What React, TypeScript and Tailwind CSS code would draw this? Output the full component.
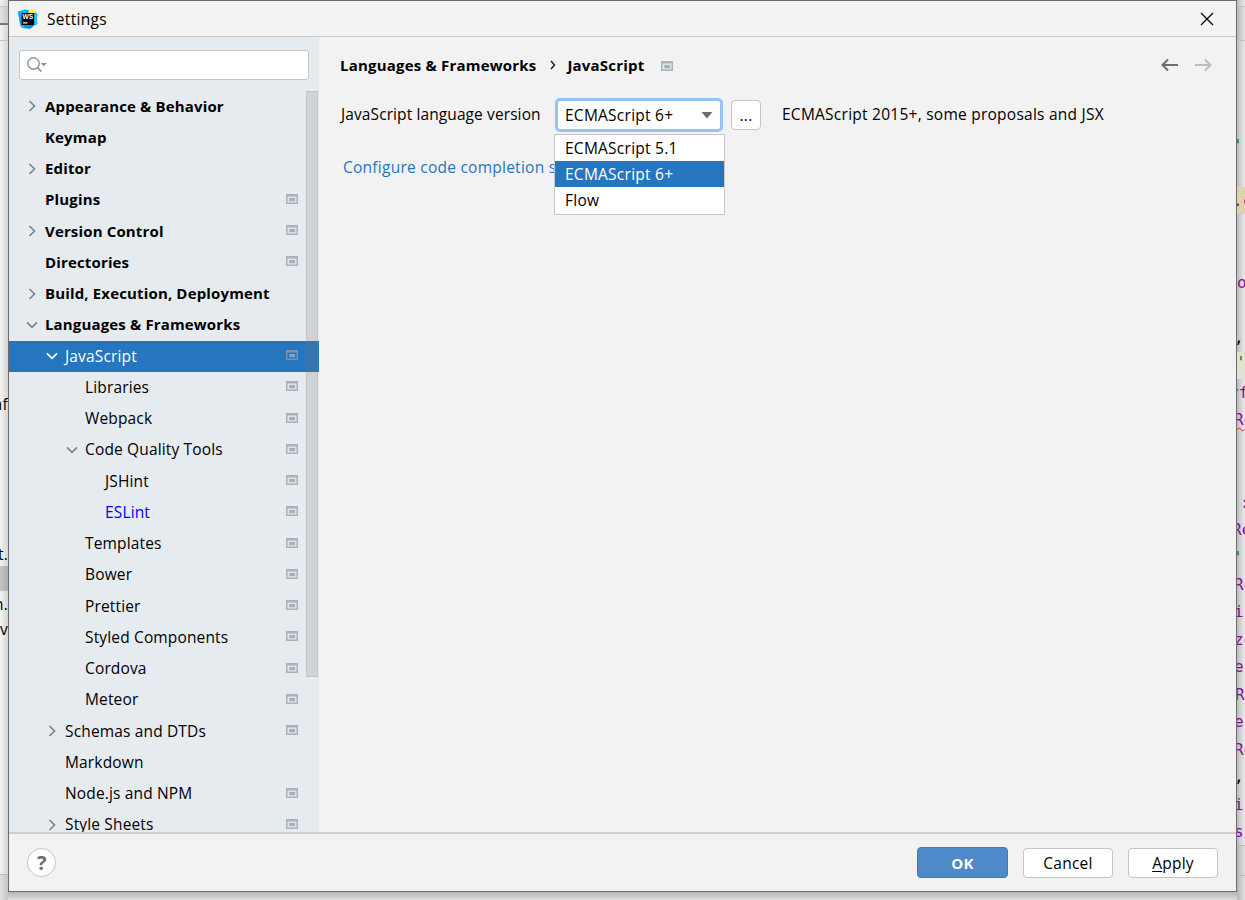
import React from "react";
import clsx from "clsx";

type TreeItem = {
  label: string;
  level: number;
  arrow?: "open" | "closed";
  project?: boolean;
  bold?: boolean;
  selected?: boolean;
  link?: boolean;
};

const tree: TreeItem[] = [
  { label: "Appearance & Behavior", level: 0, arrow: "closed", bold: true },
  { label: "Keymap", level: 0, bold: true },
  { label: "Editor", level: 0, arrow: "closed", bold: true },
  { label: "Plugins", level: 0, bold: true, project: true },
  { label: "Version Control", level: 0, arrow: "closed", bold: true, project: true },
  { label: "Directories", level: 0, bold: true, project: true },
  { label: "Build, Execution, Deployment", level: 0, arrow: "closed", bold: true },
  { label: "Languages & Frameworks", level: 0, arrow: "open", bold: true },
  { label: "JavaScript", level: 1, arrow: "open", project: true, selected: true },
  { label: "Libraries", level: 2, project: true },
  { label: "Webpack", level: 2, project: true },
  { label: "Code Quality Tools", level: 2, arrow: "open", project: true },
  { label: "JSHint", level: 3, project: true },
  { label: "ESLint", level: 3, project: true, link: true },
  { label: "Templates", level: 2, project: true },
  { label: "Bower", level: 2, project: true },
  { label: "Prettier", level: 2, project: true },
  { label: "Styled Components", level: 2, project: true },
  { label: "Cordova", level: 2, project: true },
  { label: "Meteor", level: 2, project: true },
  { label: "Schemas and DTDs", level: 1, arrow: "closed", project: true },
  { label: "Markdown", level: 1 },
  { label: "Node.js and NPM", level: 1, project: true },
  { label: "Style Sheets", level: 1, arrow: "closed", project: true },
];

const indents = ["pl-[15px]", "pl-[35px]", "pl-[55px]", "pl-[75px]"];

const options = ["ECMAScript 5.1", "ECMAScript 6+", "Flow"];

// what is still visible of the editor, one entry per code line
const codeLines = ["'", "", ".c", "", "", "o", "", ",", "'", "rf", "Re", "", "", ":", "Re", "'", "Re", "i:", "ze", "e", "R", "e", "Re", ",", "is", "sh"];

const codeShift: Record<number, string> = {
  0: "-ml-[4px]",
  2: "-ml-[4px]",
  5: "ml-0",
  7: "-ml-[3px]",
  8: "-ml-[1px] -mt-[3px]",
  9: "-ml-[8px]",
  13: "ml-[3px]",
  14: "-ml-[5px]",
  15: "-ml-[4px]",
  20: "-ml-[2px]",
  23: "-ml-[3px]",
};

const fileRows = ["nf", "", "", "", "", "", "t.", "", "n.", "t.v"];

const ProjectIcon = ({ selected }: { selected?: boolean }) => (
  <svg width="12" height="10" viewBox="0 0 12 10" className="block shrink-0">
    <path d="M0 0h12v10H0z" fill={selected ? "#7494b3" : "#a8b4bb"} />
    <path d="M1.5 2.5h9v6h-9z" fill={selected ? "#2675bf" : "#dfe4e7"} />
    <path d="M3.3 4h5.7v3.2H3.3z" fill={selected ? "#8aa3bb" : "#a3b0b7"} />
  </svg>
);

const Arrow = ({ type, selected }: { type?: "open" | "closed"; selected?: boolean }) => (
  <svg width="16" height="16" viewBox="0 0 16 16" fill="none" stroke={selected ? "#ffffff" : "#7f8487"} strokeWidth="1.7" className="-mt-px shrink-0">
    {type === "closed" && <path d="M5.5 3l5 5-5 5" />}
    {type === "open" && <path d="M3 5.3l5 5 5-5" />}
  </svg>
);

const WebStormLogo = () => (
  <svg width="20" height="20" viewBox="0 0 20 20">
    <path d="M0 2.5L7 .3l3 .7 6 3 3 8-5 7-7 .5-3.5-1L2 15z" fill="#12b8f5" />
    <path d="M0 2.5L5 9 3.5 18.5 2 15z" fill="#0aa0ee" />
    <path d="M9 2l6-1 2.5 2.5L19.5 5l-1 4 1 6L14 17.5 12 20l-6-1.500 1-3z" fill="#0a8bf5" />
    <path d="M11 .8L16 .4l1.7 3.2-3.5 1.8-4-1.8z" fill="#edf04f" />
    <path d="M17 3l2.5 2-1 5 .5 5-3 .5z" fill="#24c8ee" />
    <path d="M3.7 4h12.3v12H3.7z" fill="#000" />
    <path d="M5 13.3h4.5v1.2H5z" fill="#fff" />
    <text x="4.5" y="10" fill="#fff" fontSize="6.6" fontWeight="700" letterSpacing="0" fontFamily="Liberation Sans, sans-serif">WS</text>
  </svg>
);

const TitleBar = () => (
  <div className="flex h-9 shrink-0 items-center border-b border-[#c8c8c8] bg-[#f3f3f3] pr-[22px] pl-[9px]">
    <WebStormLogo />
    <span className="ml-[9px] tracking-[0.3px]">Settings</span>
    <svg width="14" height="14" viewBox="0 0 14 14" stroke="#000" strokeWidth="1.2" className="ml-auto">
      <path d="M1 1l12 12M13 1L1 13" />
    </svg>
  </div>
);

const Sidebar = () => (
  <div className="flex w-[310px] shrink-0 flex-col overflow-hidden bg-[#e6ebef]">
    <div className="mx-[10px] mt-[13px] flex h-[30px] shrink-0 items-center rounded-[3px] border border-[#c4c4c4] bg-white pl-[7px]">
      <svg width="22" height="18" viewBox="0 0 22 18" fill="none">
        <circle cx="6.5" cy="7.5" r="5.7" stroke="#8b959b" strokeWidth="1.4" />
        <path d="M10.5 11.7l4 4" stroke="#8b959b" strokeWidth="1.8" />
        <path d="M13.8 7h6l-3 3.4z" fill="#8b959b" />
      </svg>
    </div>
    <div className="mt-[11px] flex min-h-0 flex-1 overflow-hidden">
      <div className="w-full shrink-0">
        {tree.map((item) => (
          <div
            key={item.label}
            className={clsx(
              "flex h-[31.25px] items-center pr-[21px]",
              indents[item.level],
              item.selected && "bg-[#2675bf] text-white",
              item.link && "text-[#0000ff]",
              item.bold ? "text-[15px] font-bold tracking-[0.15px]" : "tracking-[0.15px]"
            )}
          >
            <Arrow type={item.arrow} selected={item.selected} />
            <span className="-mt-[2px] ml-[5px] flex-1 whitespace-nowrap">{item.label}</span>
            {item.project && (
              <span className="-mt-[3px]">
                <ProjectIcon selected={item.selected} />
              </span>
            )}
          </div>
        ))}
      </div>
      <div className="-ml-[13px] h-[586px] w-[12px] shrink-0 border border-[#73737326] bg-[#73737333]" />
    </div>
  </div>
);

const VersionSelect = () => (
  <div className="relative ml-[13px]">
    <div className="flex h-[34px] w-[168px] items-center rounded-[5px] border-[3px] border-[#97c3f3] bg-white pr-[7px] pl-[7px]">
      <span className="flex-1 whitespace-nowrap">ECMAScript 6+</span>
      <svg width="12" height="7" viewBox="0 0 12 7">
        <path d="M0.5 0h11L6 6.5z" fill="#6e6e6e" />
      </svg>
    </div>
    <div className="absolute top-[36px] -left-[1px] z-10 w-[171px] border border-[#c8c8c8] bg-white pb-px">
      {options.map((option) => (
        <div key={option} className={clsx("flex h-[26px] items-center pl-[10px]", option === "ECMAScript 6+" && "bg-[#2675bf] text-white")}>
          {option}
        </div>
      ))}
    </div>
  </div>
);

const Content = () => (
  <div className="flex min-w-0 flex-1 flex-col pr-[24px] pl-[21px]">
    <div className="mt-[17px] flex h-[22px] items-center text-[15px] font-bold tracking-[0.2px]">
      <span>Languages &amp; Frameworks</span>
      <svg width="8" height="10" viewBox="0 0 8 10" fill="none" stroke="#1a1a1a" strokeWidth="1.4" className="ml-[13px]">
        <path d="M2 1l3.5 4L2 9" />
      </svg>
      <span className="ml-[10px]">JavaScript</span>
      <span className="mt-px ml-[17px]">
        <ProjectIcon />
      </span>
      <svg width="52" height="14" viewBox="0 0 52 14" fill="none" strokeWidth="2" className="ml-auto">
        <path d="M18 7H2.5M8 1.5L2.5 7 8 12.5" stroke="#6e6e6e" />
        <path d="M35 7h15.5M45 1.5L50.5 7 45 12.5" stroke="#bdbdbd" />
      </svg>
    </div>
    <div className="mt-[22px] flex h-[34px] items-center">
      <span className="-mt-[2px] w-[202px] pl-px whitespace-nowrap tracking-[0.1px]">JavaScript language version</span>
      <VersionSelect />
      <button className="ml-[8px] flex h-[30px] w-[30px] items-center justify-center rounded-[4px] border border-[#c4c4c4] bg-white">...</button>
      <span className="-mt-[2px] ml-[21px] whitespace-nowrap">ECMAScript 2015+, some proposals and JSX</span>
    </div>
    <div className="mt-[25px] ml-[3px] w-[211px] overflow-hidden whitespace-nowrap text-[#2675bf]">Configure code completion s</div>
  </div>
);

const Footer = () => (
  <div className="flex h-[59px] shrink-0 items-center border-t-2 border-[#cfcfcf] pr-[18px] pl-[18px]">
    <div className="flex h-[29px] w-[29px] items-center justify-center rounded-full border border-[#c4c4c4] bg-white pl-px text-xl font-bold text-[#6e6e6e]">?</div>
    <button className="ml-auto h-[31px] w-[91px] rounded-[4px] border border-[#4478b3] bg-[#4e8aca] text-[15px] font-bold text-white">OK</button>
    <button className="ml-[15px] h-[30px] w-[90px] rounded-[4px] border border-[#c4c4c4] bg-white">Cancel</button>
    <button className="ml-[15px] h-[30px] w-[90px] rounded-[4px] border border-[#c4c4c4] bg-white">
      <span className="underline underline-offset-2">A</span>pply
    </button>
  </div>
);

// left edge of the IDE window, behind the dialog
const ProjectStrip = () => (
  <div className="flex w-2 shrink-0 flex-col overflow-hidden bg-linear-to-r from-[#f4f4f4] to-[#d5d5d5]">
    <div className="h-[7px] shrink-0 border-b border-[#c4c4c4]" />
    <div className="h-[18px] shrink-0 border-b-2 border-[#777777] bg-[#00000010]" />
    <div className="h-[16px] shrink-0 border-b border-[#c0c0c0]" />
    <div className="mt-[350px] shrink-0">
      {fileRows.map((text, i) => (
        <div key={i} className={clsx("flex h-[25px] items-center justify-end whitespace-nowrap", i === 7 && "bg-[#00000030]")}>
          {text}
        </div>
      ))}
    </div>
    <div className="mt-auto h-[26px] shrink-0 border-t border-[#b8b8b8] bg-[#00000014]" />
  </div>
);

const EditorStrip = () => (
  <div className="flex w-2 shrink-0 flex-col overflow-hidden bg-linear-to-r from-[#bdbdbd] to-[#ebebeb]">
    <div className="h-[7px] shrink-0 border-b border-[#c4c4c4]" />
    <div className="h-[34px] shrink-0 border-b border-[#c0c0c0] bg-[#00000008]" />
    <div className="mt-[91px] shrink-0 font-['DejaVu_Sans_Mono',monospace] text-[16px] tracking-normal text-[#871094]">
      {codeLines.map((text, i) => (
        <div
          key={i}
          className={clsx(
            "flow-root h-[27.45px] whitespace-pre",
            i === 2 && "bg-[#ded3ac]",
            i === 8 && "bg-[#e3e1d3]",
            text === "'" && "text-[#067d17]",
            text === "," && "text-black",
            i === 10 && "underline decoration-[#e02020] decoration-wavy decoration-1 underline-offset-2"
          )}
        >
          <div className={clsx("leading-[27px]", codeShift[i] ?? "-ml-[3px]")}>{text}</div>
        </div>
      ))}
    </div>
    <div className="mt-auto h-[56px] shrink-0 border-t border-[#b8b8b8] bg-[#0000000a]">
      <div className="h-[30px] border-b border-[#b8b8b8]" />
    </div>
  </div>
);

export default function App() {
  return (
    <div className="h-[900px] w-[1245px] overflow-hidden bg-[#d9d9d9] font-['Open_Sans','Noto_Sans',sans-serif] text-[15.5px] leading-5 tracking-[0.25px] text-black">
      <div className="flex h-full">
        <ProjectStrip />
        <div className="flex w-[1229px] shrink-0 flex-col">
          <div className="flex h-[892px] flex-col border border-[#6b6b6b] bg-[#f2f2f2]">
            <TitleBar />
            <div className="flex min-h-0 flex-1">
              <Sidebar />
              <Content />
            </div>
            <Footer />
          </div>
          <div className="h-2 bg-linear-to-b from-[#b4b4b4] to-[#dedede]" />
        </div>
        <EditorStrip />
      </div>
    </div>
  );
}
